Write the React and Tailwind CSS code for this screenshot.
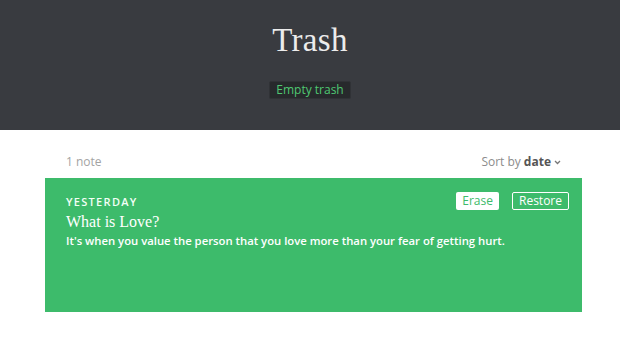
import React from "react";

export default function App() {
  return (
    <div className="w-[620px] h-[356px] bg-white overflow-hidden font-['Open_Sans','Liberation_Sans',sans-serif]">
      {/* Header */}
      <div className="h-[130px] bg-[#393b40] flex flex-col items-center pt-[21px]">
        <h1 className="text-[33px] leading-[39px] text-[#ececec] font-['Liberation_Serif',serif] tracking-[0.3px]">
          Trash
        </h1>
        <button className="mt-[21px] h-[18px] px-[6px] rounded-[2px] bg-[#27292c] border border-[#303236] text-[12px] leading-[16px] text-[#4fc872]">
          Empty trash
        </button>
      </div>

      {/* List */}
      <div className="ml-[45px] w-[537px]">
        <div className="flex items-end justify-between h-[48px] px-[21px] pb-[7px]">
          <span className="text-[12px] text-[#a3a3a3]">1 note</span>
          <span className="text-[12px] text-[#8c8c8c] flex items-center gap-[3px]">
            Sort by <b className="text-[#555] font-bold">date</b>
            <svg width="7" height="5" viewBox="0 0 7 5" className="mt-[1px]">
              <path d="M1 1l2.5 2.5L6 1" stroke="#777" strokeWidth="1.3" fill="none" />
            </svg>
          </span>
        </div>

        <div className="h-[134px] bg-[#3dbb6b] px-[21px] pt-[16px] relative">
          <div className="absolute right-[13px] top-[14px] flex gap-[13px]">
            <button className="h-[18px] px-[6px] bg-white rounded-[2px] text-[12px] leading-[16px] text-[#3dbb6b]">
              Erase
            </button>
            <button className="h-[18px] px-[6px] border border-white rounded-[2px] text-[12px] leading-[16px] text-white">
              Restore
            </button>
          </div>
          <div className="text-[11px] leading-[16px] tracking-[1.3px] text-[#f2fff6] font-semibold">
            YESTERDAY
          </div>
          <div className="mt-[2px] text-[16px] leading-[20px] text-white font-['Liberation_Serif',serif]">
            What is Love?
          </div>
          <div className="mt-[1px] text-[11.3px] leading-[16px] text-white font-semibold">
            It's when you value the person that you love more than your fear of getting hurt.
          </div>
        </div>
      </div>
    </div>
  );
}
